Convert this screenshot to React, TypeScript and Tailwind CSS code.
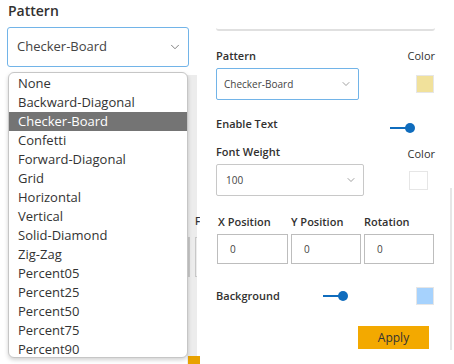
import { ChevronDown } from "lucide-react";

const patterns = [
  "None",
  "Backward-Diagonal",
  "Checker-Board",
  "Confetti",
  "Forward-Diagonal",
  "Grid",
  "Horizontal",
  "Vertical",
  "Solid-Diamond",
  "Zig-Zag",
  "Percent05",
  "Percent25",
  "Percent50",
  "Percent75",
  "Percent90",
];

function Toggle() {
  return (
    <div className="flex items-center">
      <div className="w-[16px] h-[2px] bg-[#0f6cbd]" />
      <div className="w-[10px] h-[10px] rounded-full bg-[#0f6cbd] -ml-[1px]" />
    </div>
  );
}

function Label({ children, bold }: { children: string; bold?: boolean }) {
  return (
    <div className={`text-[11px] leading-[16px] text-[#323130] ${bold ? "font-semibold" : "font-medium"}`}>
      {children}
    </div>
  );
}

function Swatch({ color, size = 18 }: { color: string; size?: number }) {
  return (
    <div
      className="border border-[#e6e6e6]"
      style={{ width: size, height: size, backgroundColor: color }}
    />
  );
}

export default function App() {
  return (
    <div className="w-[454px] h-[364px] relative overflow-hidden bg-white flex font-['Open_Sans',sans-serif] text-[#333]">
      {/* left panel */}
      <div className="w-[200px] shrink-0 flex flex-col overflow-hidden">
        <div className="pt-[1px] pl-[8px] text-[14px] leading-[20px] font-semibold text-[#323130]">Pattern</div>
        <div className="ml-[7px] mt-[6px] w-[182px] h-[40px] border border-[#72b4e8] rounded-[3px] flex items-center justify-between pl-[9px] pr-[6px]">
          <span className="text-[13px] text-[#444]">Checker-Board</span>
          <ChevronDown size={14} strokeWidth={1.4} color="#666" />
        </div>
        <div className="flex flex-1 mt-[8px]">
          <div className="w-[187px]" />
          <div className="flex flex-col w-[13px]">
            <div className="flex-1 w-[10px] bg-[#ececec] flex flex-col">
              <div className="mt-[138px] ml-[8px] text-[10px] font-semibold leading-[16px] text-[#333]">F</div>
              <div className="mt-[8px] flex gap-[5px] ml-[1px]">
                <div className="w-[3px] h-[40px] border border-[#c8c8c8]" />
                <div className="w-[6px] h-[40px] border border-[#c8c8c8] border-r-0" />
              </div>
              <div className="flex-1" />
              <div className="ml-[1px] w-[12px] h-[8px] bg-[#e8a200]" />
            </div>
          </div>
        </div>
      </div>

      {/* right panel */}
      <div className="flex-1 flex">
        <div className="w-[235px] pl-[16px] flex flex-col">
          <div className="w-[219px] h-[31px] border-b-2 border-[#e0e0e0] rounded-bl-[3px] rounded-br-[3px]" />

          <div className="mt-[17px] flex justify-between w-[219px]">
            <Label bold>Pattern</Label>
            <Label>Color</Label>
          </div>
          <div className="mt-[4px] flex items-center justify-between w-[219px]">
            <div className="w-[143px] h-[32px] border border-[#72b4e8] rounded-[2px] flex items-center justify-between pl-[7px] pr-[6px]">
              <span className="text-[10px] text-[#444]">Checker-Board</span>
              <ChevronDown size={12} strokeWidth={1.4} color="#777" />
            </div>
            <div className="mr-[1px] -mt-[1px]">
              <Swatch color="#f1e19b" />
            </div>
          </div>

          <div className="mt-[16px] flex justify-between w-[219px]">
            <Label bold>Enable Text</Label>
            <div className="mt-[7px] mr-[20px]">
              <Toggle />
            </div>
          </div>

          <div className="mt-[11px] flex justify-between w-[219px]">
            <Label bold>Font Weight</Label>
            <div className="mt-[2px]">
              <Label>Color</Label>
            </div>
          </div>
          <div className="mt-[2px] flex items-center justify-between w-[219px]">
            <div className="w-[148px] h-[32px] border border-[#c8c8c8] rounded-[2px] flex items-center justify-between pl-[9px] pr-[6px]">
              <span className="text-[10px] text-[#444]">100</span>
              <ChevronDown size={12} strokeWidth={1.4} color="#777" />
            </div>
            <div className="mr-[7px]">
              <Swatch color="#ffffff" size={19} />
            </div>
          </div>

          <div className="mt-[18px] grid grid-cols-[71px_70px_70px] gap-x-[3px] ml-[1px]">
            <div className="pl-[1px]"><Label bold>X Position</Label></div>
            <div><Label bold>Y Position</Label></div>
            <div><Label bold>Rotation</Label></div>
            {[0, 1, 2].map((i) => (
              <div
                key={i}
                className="mt-[4px] h-[30px] border border-[#bdbdbd] flex items-center pl-[12px] text-[10px] text-[#444]"
              >
                0
              </div>
            ))}
          </div>

          <div className="mt-[23px] flex items-center w-[219px]">
            <div className="w-[107px]"><Label bold>Background</Label></div>
            <Toggle />
            <div className="flex-1" />
            <div className="mr-[1px]">
              <Swatch color="#a6d2fd" />
            </div>
          </div>

          <div className="mt-[21px] flex justify-end w-[219px]">
            <div className="mr-[6px] w-[71px] h-[23px] bg-[#f3a900] flex items-center justify-center text-[12px] text-[#333]">
              Apply
            </div>
          </div>
        </div>
        <div className="ml-[15px] mt-[188px] w-[2px] h-[162px] bg-[#e6e6e6]" />
      </div>

      {/* open dropdown list */}
      <div className="absolute left-[8px] top-[72px] w-[180px] h-[286px] bg-white border border-[#c6c6c6] rounded-[6px] shadow-[0_2px_4px_rgba(0,0,0,0.18)] overflow-hidden pt-[1px]">
        {patterns.map((p) => (
          <div
            key={p}
            className={`h-[19px] leading-[19px] pl-[9px] text-[13px] ${
              p === "Checker-Board" ? "bg-[#747474] text-white" : "text-[#333]"
            }`}
          >
            {p}
          </div>
        ))}
      </div>
    </div>
  );
}
